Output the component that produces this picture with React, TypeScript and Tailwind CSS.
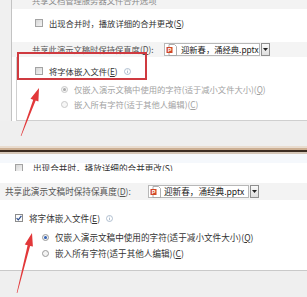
import React from 'react';

const font = { fontFamily: '"Noto Sans CJK SC", "Noto Sans", sans-serif' };

function arrowPoints(tx: number, ty: number, hx: number, hy: number) {
  const dx = hx - tx;
  const dy = hy - ty;
  const len = Math.sqrt(dx * dx + dy * dy);
  const ux = dx / len;
  const uy = dy / len;
  const px = -uy;
  const py = ux;
  const headLen = 13;
  const headW = 4.2;
  const shaftW = 1.3;
  const bx = hx - ux * headLen;
  const by = hy - uy * headLen;
  const pts = [
    [tx + px * 0.3, ty + py * 0.3],
    [bx + px * shaftW, by + py * shaftW],
    [bx + px * headW, by + py * headW],
    [hx, hy],
    [bx - px * headW, by - py * headW],
    [bx - px * shaftW, by - py * shaftW],
    [tx - px * 0.3, ty - py * 0.3],
  ];
  return pts.map((p) => p.map((v) => v.toFixed(1)).join(',')).join(' ');
}

function Box({ checked }: { checked?: boolean }) {
  if (checked) {
    return (
      <span className="w-[8px] h-[8px] border border-[#8c8c8c] bg-[#fbfbfb] shrink-0 flex items-center justify-center">
        <svg width="6" height="6" viewBox="0 0 6 6">
          <path d="M0.6 3.2 L2.3 4.9 L5.4 0.9" fill="none" stroke="#2b4c8c" strokeWidth="1.2" />
        </svg>
      </span>
    );
  }
  return (
    <span className="w-[8px] h-[8px] border border-[#a3a3a3] bg-gradient-to-br from-[#d6d6d6] to-[#f4f4f4] shrink-0" />
  );
}

function Radio({ on, blue, faded }: { on?: boolean; blue?: boolean; faded?: boolean }) {
  return (
    <span
      className={
        'w-[7px] h-[7px] rounded-full border shrink-0 flex items-center justify-center ' +
        (faded ? 'border-[#c9c9c9] bg-[#f6f6f6]' : 'border-[#9a9a9a] bg-[#f3f3f3]')
      }
    >
      {on && (
        <span
          className={
            'w-[3px] h-[3px] rounded-full ' + (blue ? 'bg-[#2f5fb3]' : 'bg-[#a9a9a9]')
          }
        />
      )}
    </span>
  );
}

function Info() {
  return (
    <svg width="7" height="7" viewBox="0 0 7 7" className="shrink-0">
      <circle cx="3.5" cy="3.5" r="3" fill="none" stroke="#9fb0c4" strokeWidth="0.8" />
      <rect x="3.1" y="3" width="0.8" height="2.2" fill="#9fb0c4" />
      <rect x="3.1" y="1.6" width="0.8" height="0.8" fill="#9fb0c4" />
    </svg>
  );
}

function PptIcon() {
  return (
    <svg width="11" height="12" viewBox="0 0 11 12" className="shrink-0">
      <path d="M3 0.5 H8.5 L10.5 2.5 V11.5 H3 Z" fill="#fff" stroke="#9a9a9a" strokeWidth="0.8" />
      <rect x="0.5" y="3" width="6" height="6" fill="#d24726" />
      <text x="1.8" y="8" fontSize="5.5" fill="#fff" fontFamily="Liberation Sans, sans-serif" fontWeight="bold">P</text>
    </svg>
  );
}

function Dropdown({ w, gap }: { w: number; gap: string }) {
  return (
    <div className="flex items-center h-[13px] gap-[1px]">
      <div className={'h-full bg-white border border-[#b8b8b8] flex items-center pl-[1px] ' + gap} style={{ width: w }}>
        <PptIcon />
        <span className="text-[#222] leading-none whitespace-nowrap">迎新春，涌经典.pptx</span>
      </div>
      <div className="w-[9px] h-full border border-[#8f8f8f] bg-gradient-to-b from-[#fafafa] to-[#dedede] flex items-center justify-center">
        <svg width="5" height="3" viewBox="0 0 5 3">
          <path d="M0 0 H5 L2.5 3 Z" fill="#222" />
        </svg>
      </div>
    </div>
  );
}

function U({ c }: { c: string }) {
  return (
    <>
      (<span className="underline">{c}</span>)
    </>
  );
}

export default function App() {
  return (
    <div className="w-[307px] h-[297px] overflow-hidden relative bg-white" style={font}>
      {/* upper capture */}
      <div className="h-[146px] bg-[#efefef] flex flex-col text-[8.3px]">
        <div className="flex h-[121px]">
          <div className="w-[12px] bg-[#f0f0f0] border-r border-[#c3c3c3] shrink-0" />
          <div className="flex-1 bg-white flex flex-col">
            <div className="h-[9px] bg-[#f3f3f3] overflow-hidden pl-[20px]">
              <div className="-mt-[6px] leading-[12px] text-[#8a8a8a] whitespace-nowrap">共享文档管理服务器文件合并选项</div>
            </div>
            <div className="mt-[9px] h-[10px] pl-[23px] flex items-center gap-[6px] text-[#333] whitespace-nowrap">
              <Box />
              <span className="leading-none">
                出现合并时，播放详细的合并更改<U c="S" />
              </span>
            </div>
            <div className="mt-[14px] h-[15px] bg-[#f4f4f4] pl-[20px] flex items-center">
              <span className="w-[132px] leading-none text-[#555] whitespace-nowrap">
                共享此演示文稿时保持保真度<U c="D" />:
              </span>
              <Dropdown w={96} gap="gap-[4px]" />
            </div>
            <div className="ml-[4px] flex-1 border-l border-b border-[#cfcfcf] flex flex-col">
              <div className="mt-[9px] h-[10px] pl-[18px] flex items-center gap-[6px] text-[#333] whitespace-nowrap">
                <Box />
                <span className="leading-none">
                  将字体嵌入文件<U c="E" />
                </span>
                <Info />
              </div>
              <div className="mt-[8px] h-[10px] pl-[44px] flex items-center gap-[6px] text-[#a2a2a2] whitespace-nowrap">
                <Radio on faded />
                <span className="leading-none">
                  仅嵌入演示文稿中使用的字符(适于减小文件大小)<U c="Q" />
                </span>
              </div>
              <div className="mt-[5px] h-[10px] pl-[44px] flex items-center gap-[6px] text-[#a2a2a2] whitespace-nowrap">
                <Radio faded />
                <span className="leading-none">
                  嵌入所有字符(适于其他人编辑)<U c="C" />
                </span>
              </div>
            </div>
          </div>
        </div>
      </div>

      {/* seam between the two captures */}
      <div className="h-[2px] bg-[#e9dccf]" />
      <div className="h-[2px] bg-[#cdb094]" />
      <div className="h-[2px] bg-[#3b2c22]" />
      <div className="h-[2px] bg-[#d4c6b8]" />

      {/* lower capture */}
      <div className="h-[143px] bg-[#efefef] flex flex-col text-[8.6px]">
        <div className="h-[117px] bg-white border-b border-[#c9c9c9] flex flex-col">
          <div className="h-[9px] bg-[#f5f8fc]" />
          <div className="h-[8px] overflow-hidden flex items-end pl-[15px] text-[#333] whitespace-nowrap">
            <div className="flex items-center gap-[10px] h-[10px] -mb-[2px]">
              <Box />
              <span className="leading-none">
                出现合并时，播放详细的合并更改<U c="S" />
              </span>
            </div>
          </div>
          <div className="mt-[12px] h-[17px] bg-[#f3f3f3] pl-[5px] flex items-center">
            <span className="w-[143px] leading-none text-[#555] whitespace-nowrap">
              共享此演示文稿时保持保真度<U c="D" />:
            </span>
            <Dropdown w={101} gap="gap-[3px]" />
          </div>
          <div className="mt-[13px] h-[10px] pl-[15px] flex items-center gap-[6px] text-[#333] whitespace-nowrap">
            <Box checked />
            <span className="leading-none">
              将字体嵌入文件<U c="E" />
            </span>
            <Info />
          </div>
          <div className="mt-[9px] h-[10px] pl-[42px] flex items-center gap-[6px] text-[#333] whitespace-nowrap">
            <Radio on blue />
            <span className="leading-none">
              仅嵌入演示文稿中使用的字符(适于减小文件大小)<U c="Q" />
            </span>
          </div>
          <div className="mt-[6px] h-[10px] pl-[42px] flex items-center gap-[6px] text-[#333] whitespace-nowrap">
            <Radio />
            <span className="leading-none">
              嵌入所有字符(适于其他人编辑)<U c="C" />
            </span>
          </div>
        </div>
      </div>

      {/* annotations */}
      <div className="absolute left-[17px] top-[52px] w-[130px] h-[28px] border-2 border-[#cf3a40]" />
      <svg className="absolute left-0 top-0 pointer-events-none" width="307" height="297">
        <polygon points={arrowPoints(21, 136, 39, 88)} fill="#e2383a" />
        <polygon points={arrowPoints(17, 293, 32, 233)} fill="#e2383a" />
      </svg>
    </div>
  );
}
